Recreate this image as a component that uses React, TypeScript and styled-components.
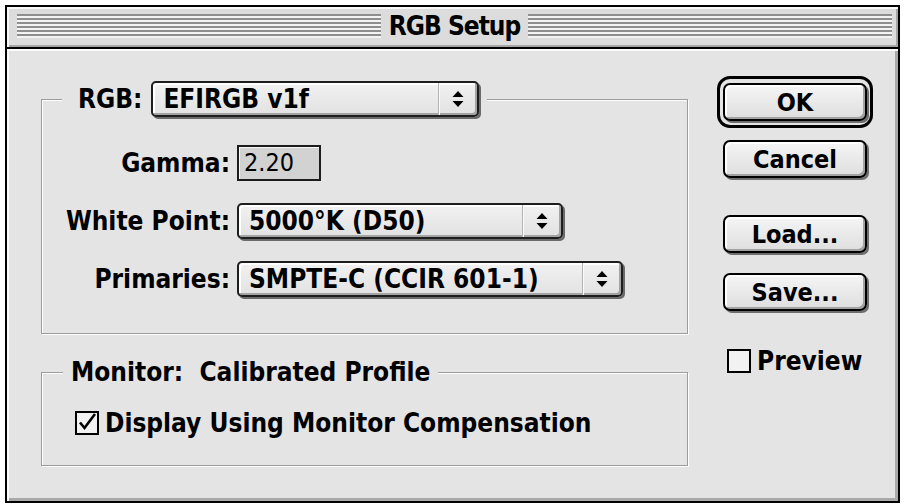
import styled, { createGlobalStyle } from 'styled-components';

const GlobalStyle = createGlobalStyle`
  html, body {
    margin: 0;
    padding: 0;
    background: #ffffff;
  }
  body {
    font-family: "DejaVu Sans Condensed", "DejaVu Sans", "Liberation Sans Narrow", sans-serif;
    font-stretch: condensed;
    color: #000;
  }
`;

const Arrows = () => (
  <svg width="12" height="20" viewBox="0 0 12 20">
    <polygon points="0.5,8 6,2 11.5,8" fill="#000" />
    <polygon points="0.5,12 6,18 11.5,12" fill="#000" />
  </svg>
);

const Check = ({ checked }: { checked?: boolean }) => (
  <svg width="24" height="24" viewBox="0 0 24 24">
    <rect x="1" y="1" width="22" height="22" fill="#f2f2f2" stroke="#000" strokeWidth="2" />
    {checked && (
      <path d="M5 11.5 L9.5 17 L20 3" fill="none" stroke="#000" strokeWidth="2.6" strokeLinejoin="miter" />
    )}
  </svg>
);

type PopupProps = { value: string; width: number };

const Popup = ({ value, width }: PopupProps) => (
  <PopupBox style={{ width }}>
    <PopupValue>{value}</PopupValue>
    <PopupArrow>
      <Arrows />
    </PopupArrow>
  </PopupBox>
);

const App = () => {
  return (
    <>
      <GlobalStyle />
      <Window>
        <TitleBar>
          <Stripes />
          <Title>RGB Setup</Title>
          <Stripes />
        </TitleBar>
        <Content>
          <LeftColumn>
            <Group>
              <Legend $left={20} $pad={16}>
                <LegendLabel>RGB:</LegendLabel>
                <Popup value="EFIRGB v1f" width={328} />
              </Legend>
              <Rows>
                <Label>Gamma:</Label>
                <Field>2.20</Field>
                <Label>White Point:</Label>
                <Popup value="5000°K (D50)" width={326} />
                <Label>Primaries:</Label>
                <Popup value="SMPTE-C (CCIR 601-1)" width={386} />
              </Rows>
            </Group>
            <MonitorGroup>
              <Legend $left={21} $pad={8}>
                <LegendText>Monitor:&nbsp; Calibrated Profile</LegendText>
              </Legend>
              <CheckRow $indent={33}>
                <Check checked />
                <span>Display Using Monitor Compensation</span>
              </CheckRow>
            </MonitorGroup>
          </LeftColumn>
          <ButtonColumn>
            <DefaultRing>
              <Button>OK</Button>
            </DefaultRing>
            <Button $top={12} $left={6}>Cancel</Button>
            <Button $top={37} $left={6}>Load...</Button>
            <Button $top={20} $left={6}>Save...</Button>
            <CheckRow $indent={10} $top={35}>
              <Check />
              <span>Preview</span>
            </CheckRow>
          </ButtonColumn>
        </Content>
      </Window>
    </>
  );
};

const Window = styled.div`
  margin: 5px 0 0 5px;
  width: 895px;
  height: 498px;
  box-sizing: border-box;
  border: 2px solid #000;
  display: flex;
  flex-direction: column;
  background: #e4e4e4;
`;

const TitleBar = styled.div`
  height: 42px;
  flex: none;
  display: flex;
  align-items: center;
  gap: 8px;
  padding: 0 6px 2px 10px;
  box-sizing: border-box;
  background: #dcdcdc;
  border-bottom: 2px solid #000;
  box-shadow: inset 2px 2px 0 #f7f7f7, inset -2px -2px 0 #a6a6a6;
`;

const Stripes = styled.div`
  flex: 1;
  height: 24px;
  background: repeating-linear-gradient(to bottom, #8e8e8e 0 2px, #f3f3f3 2px 4px);
`;

const Title = styled.div`
  font-size: 26px;
  font-weight: bold;
  letter-spacing: -1px;
  line-height: 1;
`;

const Content = styled.div`
  flex: 1;
  display: grid;
  grid-template-columns: 647px 156px;
  column-gap: 29px;
  align-items: start;
  padding: 27px 0 0 34px;
  box-shadow: inset 2px 2px 0 #fbfbfb, inset -3px -3px 0 #a9a9a9;
`;

const LeftColumn = styled.div`
  padding-top: 5px;
  display: flex;
  flex-direction: column;
`;

const Group = styled.fieldset`
  margin: 0;
  padding: 28px 0 36px 0;
  border: 1px solid #9c9c9c;
  box-shadow: 1px 1px 0 #ffffff, inset 1px 1px 0 #ffffff;
  min-width: 0;
`;

const MonitorGroup = styled(Group)`
  margin-top: 24px;
  padding: 22px 0 27px 0;
`;

const Legend = styled.legend<{ $left: number; $pad: number }>`
  margin-left: ${({ $left }) => $left}px;
  padding: 0 8px 0 ${({ $pad }) => $pad}px;
  display: flex;
  align-items: center;
  gap: 9px;
  background: #e4e4e4;
`;

const LegendLabel = styled.span`
  font-size: 26px;
  font-weight: bold;
`;

const LegendText = styled.span`
  font-size: 26px;
  font-weight: bold;
  line-height: 28px;
`;

const Rows = styled.div`
  display: grid;
  grid-template-columns: 188px auto;
  column-gap: 7px;
  row-gap: 22px;
  align-items: center;
  justify-items: start;
`;

const Label = styled.span`
  justify-self: end;
  font-size: 26px;
  font-weight: bold;
`;

const Field = styled.div`
  width: 84px;
  height: 36px;
  box-sizing: border-box;
  border: 2px solid #1c1c1c;
  box-shadow: inset 1px 1px 0 #f6f6f6;
  background: #d2d2d2;
  font-size: 25px;
  line-height: 31px;
  padding-left: 5px;
`;

const PopupBox = styled.div`
  height: 36px;
  box-sizing: border-box;
  display: flex;
  border: 2px solid #1e1e1e;
  border-radius: 5px;
  background: linear-gradient(#f1f1f1, #e2e2e2);
  box-shadow: inset -2px -2px 0 #a4a4a4, inset 2px 2px 0 #ffffff, 2px 2px 0 #6a6a6a;
`;

const PopupValue = styled.div`
  flex: 1;
  font-size: 26px;
  font-weight: bold;
  line-height: 32px;
  padding-left: 10px;
  white-space: nowrap;
`;

const PopupArrow = styled.div`
  width: 38px;
  display: flex;
  align-items: center;
  justify-content: center;
  border-left: 1px solid #b4b4b4;
  box-shadow: inset 1px 0 0 #fafafa;
`;

const CheckRow = styled.label<{ $indent: number; $top?: number }>`
  display: flex;
  align-items: center;
  gap: 6px;
  margin: ${({ $top }) => $top ?? 0}px 0 0 ${({ $indent }) => $indent}px;
  font-size: 26px;
  font-weight: bold;
`;

const ButtonColumn = styled.div`
  display: flex;
  flex-direction: column;
  align-items: flex-start;
`;

const DefaultRing = styled.div`
  padding: 4px 3px;
  border: 3px solid #000;
  border-radius: 13px;
`;

const Button = styled.button<{ $top?: number; $left?: number }>`
  margin: ${({ $top }) => $top ?? 0}px 0 0 ${({ $left }) => $left ?? 0}px;
  width: 144px;
  height: 38px;
  padding: 0;
  border: 2px solid #000;
  border-radius: 7px;
  background: linear-gradient(#f5f5f5, #dedede);
  box-shadow: inset -2px -2px 0 #a2a2a2, inset 2px 2px 0 #ffffff, 2px 2px 0 #6e6e6e;
  font-family: inherit;
  font-stretch: condensed;
  font-size: 25px;
  font-weight: bold;
  color: #000;
`;

export default App;
